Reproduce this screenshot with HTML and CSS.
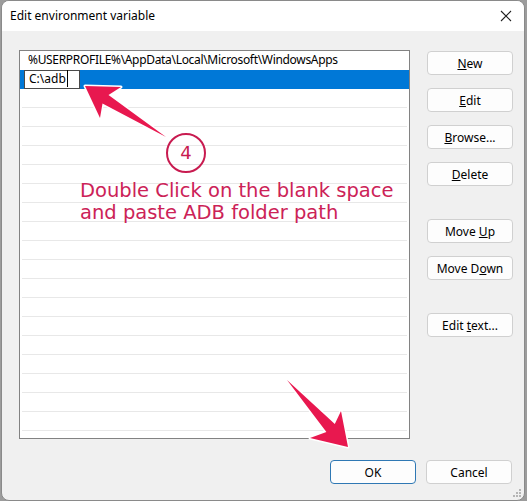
FILE: index.html
```html
<!DOCTYPE html>
<html lang="en">
<head>
  <meta charset="UTF-8" />
  <title>Edit environment variable</title>
  <link rel="stylesheet" href="styles.css">
</head>
<body>
  <div class="window">
    <div class="titlebar">
      <span class="title">Edit environment variable</span>
      <svg class="close" width="12" height="12" viewBox="0 0 12 12">
        <path d="M1 1 L11 11 M11 1 L1 11" stroke="#222" stroke-width="1.1" />
      </svg>
    </div>

    <div class="content">
      <div class="main">
        <div class="list">
          <div class="row">%USERPROFILE%\AppData\Local\Microsoft\WindowsApps</div>
          <div class="row selected">
            <div class="editbox"><span class="caret">C:\adb</span></div>
          </div>
          <div class="row line"></div>
          <div class="row line"></div>
          <div class="row line"></div>
          <div class="row line"></div>
          <div class="row line"></div>
          <div class="row line"></div>
          <div class="row line"></div>
          <div class="row line"></div>
          <div class="row line"></div>
          <div class="row line"></div>
          <div class="row line"></div>
          <div class="row line"></div>
          <div class="row line"></div>
          <div class="row line"></div>
          <div class="row line"></div>
          <div class="row line"></div>
          <div class="row line"></div>
          <div class="row line"></div>
          <div class="row line"></div>
        </div>

        <div class="side">
          <button class="btn"><u>N</u>ew</button>
          <button class="btn"><u>E</u>dit</button>
          <button class="btn"><u>B</u>rowse...</button>
          <button class="btn"><u>D</u>elete</button>
          <button class="btn spaced">Move <u>U</u>p</button>
          <button class="btn">Move D<u>o</u>wn</button>
          <button class="btn spaced">Edit <u>t</u>ext...</button>
        </div>
      </div>

      <div class="footer">
        <button class="btn default">OK</button>
        <button class="btn">Cancel</button>
      </div>
    </div>

    <svg class="grip" width="10" height="10" viewBox="0 0 10 10">
      <rect x="7" y="1" width="2" height="2" fill="#b5b5b5" />
      <rect x="4" y="4" width="2" height="2" fill="#b5b5b5" />
      <rect x="7" y="4" width="2" height="2" fill="#b5b5b5" />
      <rect x="1" y="7" width="2" height="2" fill="#b5b5b5" />
      <rect x="4" y="7" width="2" height="2" fill="#b5b5b5" />
      <rect x="7" y="7" width="2" height="2" fill="#b5b5b5" />
    </svg>
  </div>

  <!-- tutorial markup drawn over the dialog -->
  <svg class="markup" width="527" height="501" viewBox="0 0 527 501">
    <polygon points="85,86 121,87 108.5,95 166,137 102.5,103.5 100,118"
      fill="#e8184f" stroke="#fff" stroke-width="3" stroke-linejoin="round" paint-order="stroke" />
    <polygon points="348,447 341,411 334.8,424 287,380 326.4,432 310,438"
      fill="#e8184f" stroke="#fff" stroke-width="3" stroke-linejoin="round" paint-order="stroke" />
    <circle cx="186" cy="153" r="19" fill="none" stroke="#c81b50" stroke-width="2" />
  </svg>
  <div class="step">4</div>
  <div class="note">Double Click on the blank space<br>and paste ADB folder path</div>
</body>
</html>
```

FILE: styles.css
```css
body {
  margin: 0;
  width: 527px;
  height: 501px;
  background: #9c9c9c;
  font-family: "Noto Sans", "Open Sans", sans-serif;
  font-size: 12px;
  color: #000;
  position: relative;
  overflow: hidden;
}
.window {
  position: relative;
  margin: 0 2px 0 1px;
  height: 499px;
  background: #f0f0f0;
  border: 1px solid #8a8a8a;
  border-radius: 8px;
  overflow: hidden;
}
.titlebar {
  height: 30px;
  background: #fff;
  display: flex;
  align-items: center;
  justify-content: space-between;
  padding: 0 12px 0 8px;
}
.title {
  font-size: 12px;
  margin-top: -1px;
}
.close {
  margin-top: -1px;
}
.content {
  padding: 19px 11px 0 17px;
}
.main {
  display: flex;
  gap: 17px;
}
.list {
  width: 388px;
  height: 387px;
  border: 1px solid #828282;
  background: #fff;
  overflow: hidden;
  padding: 0 2px;
}
.row {
  height: 19px;
  line-height: 18px;
  padding-left: 6px;
  box-sizing: border-box;
  white-space: nowrap;
  letter-spacing: -0.32px;
}
.row.selected {
  background: #0078d7;
  margin: 0 -2px;
  padding: 1px 0 0 4px;
}
.row.line {
  border-bottom: 1px solid #e8e8e8;
}
.editbox {
  width: 56px;
  height: 19px;
  margin-top: -1px;
  border: 1px solid #4a4a4a;
  background: #fff;
  padding-left: 4px;
  line-height: 16px;
  box-sizing: border-box;
  letter-spacing: 0;
}
.caret {
  border-right: 1px solid #000;
  padding-right: 1px;
}
.side {
  display: flex;
  flex-direction: column;
  gap: 13px;
  padding-top: 1px;
  width: 86px;
}
.btn {
  width: 86px;
  height: 24px;
  border: 1px solid #d0d0d0;
  border-radius: 4px;
  background: #fdfdfd;
  font-family: "Noto Sans", "Open Sans", sans-serif;
  font-size: 12px;
  color: #000;
  padding: 0;
  cursor: default;
}
.btn.spaced {
  margin-top: 20px;
}
.btn.default {
  border-color: #2f78b4;
}
.footer {
  display: flex;
  justify-content: flex-end;
  gap: 10px;
  margin-top: 21px;
  padding-right: 1px;
}
.grip {
  position: absolute;
  right: 2px;
  bottom: 2px;
}
.markup {
  position: absolute;
  left: 0;
  top: 0;
}
.step {
  position: absolute;
  left: 167px;
  top: 142px;
  width: 38px;
  text-align: center;
  font-family: "DejaVu Sans", sans-serif;
  font-size: 18px;
  line-height: 22px;
  color: #c81b50;
}
.note {
  position: absolute;
  left: 80px;
  top: 180px;
  font-family: "DejaVu Sans", sans-serif;
  font-size: 19.5px;
  line-height: 22px;
  color: #cc2257;
  white-space: nowrap;
}
```
